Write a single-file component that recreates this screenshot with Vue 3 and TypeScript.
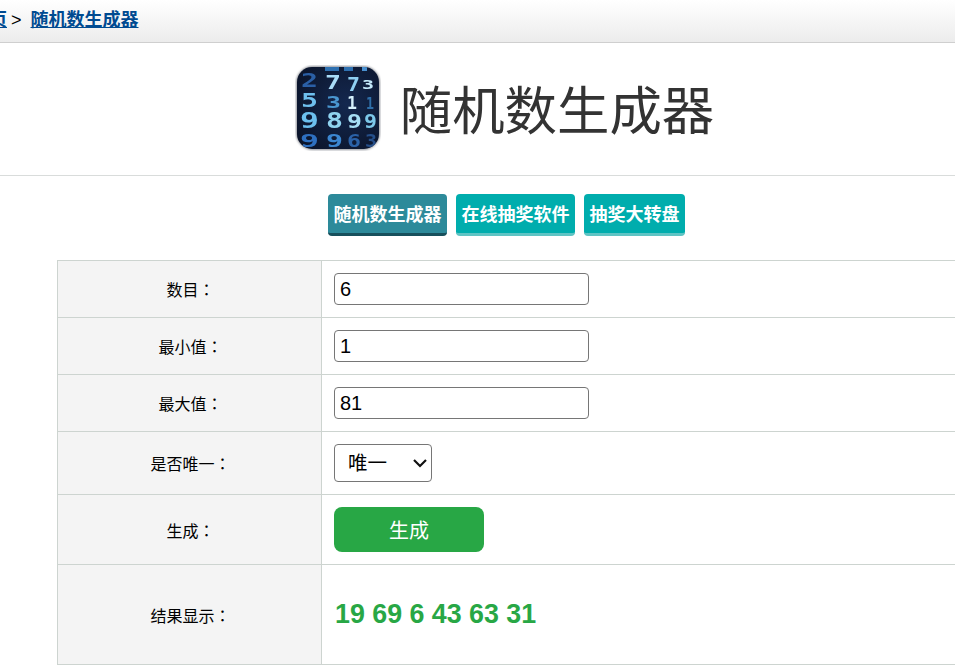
<script setup lang="ts">
import { ref } from 'vue'

const count = ref('6')
const min = ref('1')
const max = ref('81')
const unique = ref('唯一')
const tabs = [
  { label: '随机数生成器', active: true },
  { label: '在线抽奖软件', active: false },
  { label: '抽奖大转盘', active: false },
]
const iconDigits = [
  { d: '2', x: 6, y: 22, w: 17, s: 19, c: '#2b5fa5' },
  { d: '7', x: 30, y: 24, w: 16, s: 19, c: '#a9dcf7' },
  { d: '7', x: 52, y: 26, w: 13, s: 19, c: '#8fd0f3' },
  { d: '3', x: 67, y: 24, w: 12, s: 13, c: '#c4e9fb' },
  { d: '5', x: 6, y: 42, w: 17, s: 19, c: '#6ec0ee' },
  { d: '3', x: 31, y: 43, w: 15, s: 16, c: '#4a96d0' },
  { d: '1', x: 52, y: 44, w: 10, s: 17, c: '#d5f0fb' },
  { d: '1', x: 71, y: 44, w: 8, s: 15, c: '#2e6ea8' },
  { d: '9', x: 5, y: 63, w: 19, s: 21, c: '#6cc0ee' },
  { d: '8', x: 31, y: 63, w: 17, s: 21, c: '#8fd3f0' },
  { d: '9', x: 52, y: 63, w: 15, s: 20, c: '#a5def5' },
  { d: '9', x: 69, y: 63, w: 13, s: 19, c: '#7cc8ea' },
  { d: '9', x: 5, y: 82, w: 19, s: 18, c: '#2f6fc0' },
  { d: '9', x: 31, y: 82, w: 17, s: 18, c: '#3b86d0' },
  { d: '6', x: 52, y: 82, w: 14, s: 18, c: '#2c62a8' },
  { d: '3', x: 70, y: 82, w: 12, s: 18, c: '#254f8a' },
]
const iconDashes = [
  { x: 30, w: 14, c: '#2f6fb0' },
  { x: 49, w: 9, c: '#2f6fb0' },
  { x: 67, w: 5, c: '#4a90d0' },
]
</script>

<template>
  <div class="page">
    <div class="sheet">
      <nav class="crumb">
        <a class="link" href="#">首页</a>
        <span class="sep">&gt;</span>
        <a class="link" href="#">随机数生成器</a>
      </nav>

      <header class="title">
        <svg class="logo" width="86" height="86" viewBox="0 0 86 86">
          <defs>
            <clipPath id="logoClip"><rect x="2" y="2" width="82" height="82" rx="15" /></clipPath>
            <radialGradient id="logoBg" cx="0.6" cy="0.45" r="0.75">
              <stop offset="0" stop-color="#14284f" />
              <stop offset="1" stop-color="#0a1226" />
            </radialGradient>
            <filter id="soft"><feGaussianBlur stdDeviation="0.45" /></filter>
            <filter id="glow"><feGaussianBlur stdDeviation="0.8" /></filter>
          </defs>
          <rect x="1" y="1" width="84" height="84" rx="17" fill="#8f9298" filter="url(#glow)" />
          <g clip-path="url(#logoClip)">
            <rect width="86" height="86" fill="url(#logoBg)" />
            <g filter="url(#soft)">
              <rect v-for="b in iconDashes" :key="b.x" :x="b.x" y="2" :width="b.w" height="4" :fill="b.c" />
              <text
                v-for="(g, i) in iconDigits"
                :key="i"
                :x="g.x"
                :y="g.y"
                class="digits"
                :fill="g.c"
                :font-size="g.s"
                :textLength="g.w"
                lengthAdjust="spacingAndGlyphs"
              >{{ g.d }}</text>
            </g>
          </g>
        </svg>
        <h1>随机数生成器</h1>
      </header>

      <div class="tabs">
        <a v-for="tab in tabs" :key="tab.label" class="tab" :class="{ active: tab.active }" href="#">{{ tab.label }}</a>
      </div>

      <table class="form">
        <tbody>
          <tr class="r57">
            <th>数目<span class="colon">：</span></th>
            <td><input v-model="count" class="field" type="text" /></td>
          </tr>
          <tr class="r57">
            <th>最小值<span class="colon">：</span></th>
            <td><input v-model="min" class="field" type="text" /></td>
          </tr>
          <tr class="r57">
            <th>最大值<span class="colon">：</span></th>
            <td><input v-model="max" class="field" type="text" /></td>
          </tr>
          <tr class="r63">
            <th>是否唯一<span class="colon">：</span></th>
            <td>
              <div class="choice-wrap">
                <select v-model="unique" class="choice">
                  <option>唯一</option>
                  <option>不唯一</option>
                </select>
                <svg class="chev" width="16" height="10" viewBox="0 0 16 10">
                  <path d="M2 2l6 6 6-6" fill="none" stroke="#111" stroke-width="2.2" />
                </svg>
              </div>
            </td>
          </tr>
          <tr class="r70">
            <th>生成<span class="colon">：</span></th>
            <td><button class="go" type="button">生成</button></td>
          </tr>
          <tr class="r100">
            <th>结果显示<span class="colon">：</span></th>
            <td class="result">19 69 6 43 63 31</td>
          </tr>
        </tbody>
      </table>
    </div>
  </div>
</template>

<style>
html, body { margin: 0; overflow: hidden; background: #fff; }
</style>

<style scoped>
.page {
  width: 955px;
  height: 667px;
  overflow: hidden;
  font-family: "Liberation Sans", "Noto Sans CJK SC", sans-serif;
  color: #000;
}
.sheet { width: 1013px; }
.crumb {
  height: 39px;
  padding-bottom: 3px;
  border-bottom: 1px solid #cfcfcf;
  background: linear-gradient(#ffffff, #ececec);
  display: flex;
  align-items: center;
  margin-left: -29px;
  font-size: 18px;
  line-height: 38px;
}
.link { color: #004b91; font-weight: 700; text-decoration: underline; }
.sep { margin: 0 9px 0 4px; color: #000; }
.title {
  height: 132px;
  border-bottom: 1px solid #d9dcdb;
  display: flex;
  align-items: center;
  justify-content: center;
  gap: 19px;
  padding-right: 4px;
}
.logo { flex: none; margin-top: -3px; }
.digits { font-family: "DejaVu Sans Mono", monospace; font-weight: 700; }
h1 {
  margin: 6px 0 0;
  font-size: 52.4px;
  font-weight: 400;
  line-height: 60px;
  color: #333;
}
.tabs {
  display: flex;
  justify-content: center;
  gap: 9px;
  margin-top: 18px;
}
.tab {
  height: 39px;
  line-height: 43px;
  padding: 0 5.5px;
  border-bottom: 3px solid #5fc4c4;
  border-radius: 4px;
  background: #00adad;
  color: #fff;
  font-size: 18px;
  font-weight: 700;
  text-decoration: none;
}
.tab.active {
  background: #2d8a9a;
  border-bottom-color: #17505c;
}
.form {
  margin: 24px 0 0 57px;
  width: 956px;
  border-collapse: collapse;
  table-layout: fixed;
}
.form th, .form td {
  border: 1px solid #cdd4d0;
  padding: 0 12px;
  font-size: 16px;
  vertical-align: middle;
}
.form th {
  width: 239px;
  padding: 0 11px 0 13px;
  background: #f4f4f4;
  font-weight: 400;
  text-align: center;
}
.colon { font-family: "Noto Sans CJK TC", sans-serif; }
.r57 th, .r57 td { height: 56px; }
.r63 th, .r63 td { height: 62px; }
.r70 th, .r70 td { height: 69px; }
.r100 th, .r100 td { height: 99px; }
.field {
  display: block;
  box-sizing: border-box;
  width: 255px;
  height: 32px;
  padding: 0 5px;
  border: 1px solid #767676;
  border-radius: 4px;
  background: #fff;
  font-family: inherit;
  font-size: 20px;
  color: #000;
}
.choice-wrap { position: relative; width: 98px; height: 38px; }
.choice {
  appearance: none;
  display: block;
  box-sizing: border-box;
  width: 98px;
  height: 38px;
  padding: 0 13px;
  border: 1px solid #767676;
  border-radius: 4px;
  background: #fff;
  font-family: inherit;
  font-size: 19.5px;
  color: #000;
}
.chev { position: absolute; right: 4px; top: 14px; pointer-events: none; }
.go {
  display: block;
  width: 150px;
  height: 45px;
  border: 0;
  border-radius: 8px;
  background: #28a745;
  color: #fff;
  font-family: inherit;
  font-size: 20px;
  padding: 0;
}
.form .result {
  padding-left: 13px;
  color: #28a745;
  font-size: 26.8px;
  font-weight: 700;
}
</style>
